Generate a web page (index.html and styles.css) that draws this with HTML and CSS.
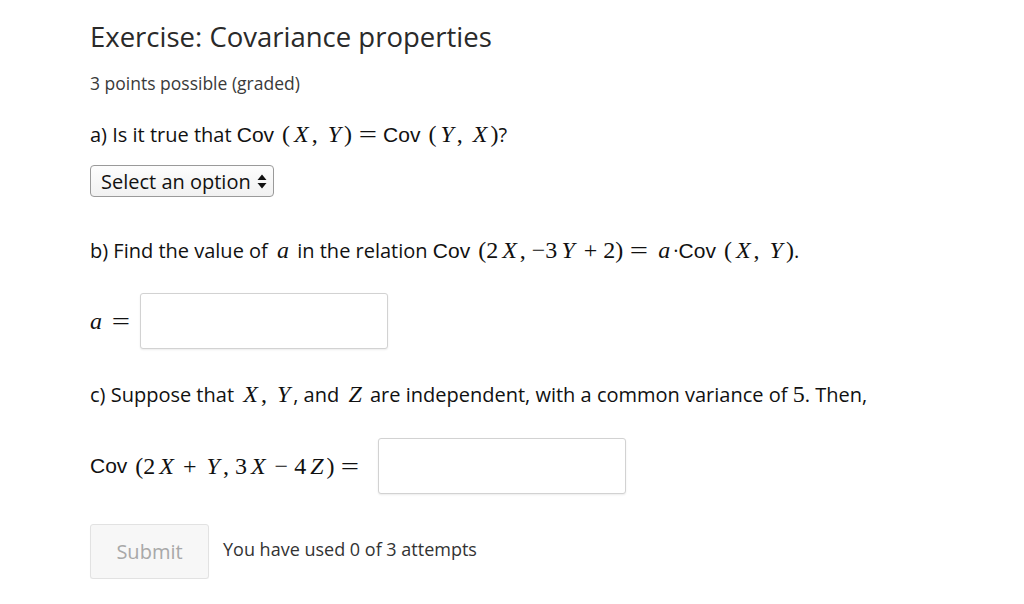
FILE: index.html
```html
<!DOCTYPE html>
<html>
<head>
<meta charset="utf-8">
<link rel="stylesheet" href="styles.css">
</head>
<body>
<div class="problem">
  <h1 class="title">Exercise: Covariance properties</h1>
  <p class="points">3 points possible (graded)</p>
  <p class="q q-a">a) Is it true that <span class="op">Cov</span><span class="m"><span class="ap">(</span><i>X</i><span class="cm">,</span><i>Y</i>)<span class="rel"><span>=</span></span></span><span class="op">Cov</span><span class="m"><span class="ap">(</span><i>Y</i><span class="cm">,</span><i>X</i>)</span>?</p>
  <div class="select"><span>Select an option</span><span class="arrows"><svg width="10" height="15" viewBox="0 0 10 15"><path d="M5 0.5 L9.5 6 L0.5 6 Z M5 14.5 L9.5 9 L0.5 9 Z" fill="#111"/></svg></span></div>
  <p class="q q-b">b) Find the value of <span class="m"><i>a</i></span> in the relation <span class="op">Cov</span><span class="m"><span class="ap">(</span>2<i>X</i><span class="cm">,</span>&minus;3<i>Y</i><span class="bin">+</span>2)<span class="rel"><span>=</span></span><i>a</i></span>&middot;<span class="op">Cov</span><span class="m"><span class="ap">(</span><i>X</i><span class="cm">,</span><i>Y</i>)</span>.</p>
  <div class="row row-b"><span class="m lbl"><i>a</i><span class="rel"><span>=</span></span></span><span class="input"></span></div>
  <p class="q q-c">c) Suppose that <span class="m"><i>X</i><span class="cm">,</span><i>Y</i></span>, and <span class="m"><i>Z</i></span> are independent, with a common variance of <span class="m">5</span>. Then,</p>
  <div class="row row-c"><span class="op">Cov</span><span class="m"><span class="ap">(</span>2<i>X</i><span class="bin">+</span><i>Y</i><span class="cm">,</span>3<i>X</i><span class="bin">&minus;</span>4<i>Z</i>)<span class="rel"><span>=</span></span></span><span class="input"></span></div>
  <div class="actions"><span class="submit">Submit</span><span class="attempts">You have used 0 of 3 attempts</span></div>
</div>
</body>
</html>
```

FILE: styles.css
```css
html, body { margin: 0; padding: 0; background: #fff; }
body { font-family: "Open Sans", sans-serif; color: #222; }
.problem { padding: 20px 0 0 90px; }
.title { font-size: 27.5px; font-weight: 400; margin: 0; line-height: 34px; color: #2a2a2a; }
.points { font-size: 17.5px; margin: 17px 0 0; line-height: 24px; color: #3a3a3a; }
.q { font-size: 20px; margin: 0; line-height: 28px; color: #111; }
.q-a { margin-top: 25px; }
.op { font-family: "Liberation Sans", sans-serif; font-size: 21px; }
.m { font-family: "Liberation Serif", serif; font-size: 24px; }
.m i { font-family: "Liberation Serif", serif; font-style: italic; font-size: 24px; padding: 0 3px 0 4px; }
.ap { margin-left: 8px; }
.cm { margin-right: 6px; }
.rel { display: inline-block; width: 19px; margin: 0 6px; text-align: center; }
.rel span { display: inline-block; transform: scaleX(1.35); }
.bin { display: inline-block; margin: 0 6px; }
.select { display: flex; align-items: center; gap: 6px; width: 184px; box-sizing: border-box; margin-top: 16px; height: 32px; padding: 0 6px 0 10px; border: 1px solid #9a9a9a; border-radius: 4px; background: linear-gradient(#fdfdfd, #f1f1f1); font-size: 20px; color: #111; }
.arrows { display: flex; align-items: center; }
.q-b { margin-top: 39px; }
.row { display: flex; align-items: center; color: #111; }
.row-b { margin-top: 28px; }
.lbl { width: 50px; }
.lbl i { padding-left: 0; }
.input { display: block; width: 248px; height: 56px; box-sizing: border-box; border: 1px solid #d2d2d2; border-radius: 3px; box-shadow: 0 1px 2px rgba(0,0,0,0.08); background: #fff; }
.q-c { margin-top: 31px; }
.row-c { margin-top: 29px; }
.row-c .rel { margin-right: 0; }
.row-c .input { margin-left: 18px; }
.actions { display: flex; align-items: center; margin-top: 30px; }
.submit { display: flex; align-items: center; justify-content: center; width: 119px; height: 55px; box-sizing: border-box; border: 1px solid #e2e2e2; border-radius: 3px; background: #f7f7f7; color: #a8a8a8; font-size: 20px; box-shadow: 0 1px 1px rgba(0,0,0,0.04); }
.attempts { margin-left: 14px; font-size: 18px; color: #333; margin-top: -6px; }
```
